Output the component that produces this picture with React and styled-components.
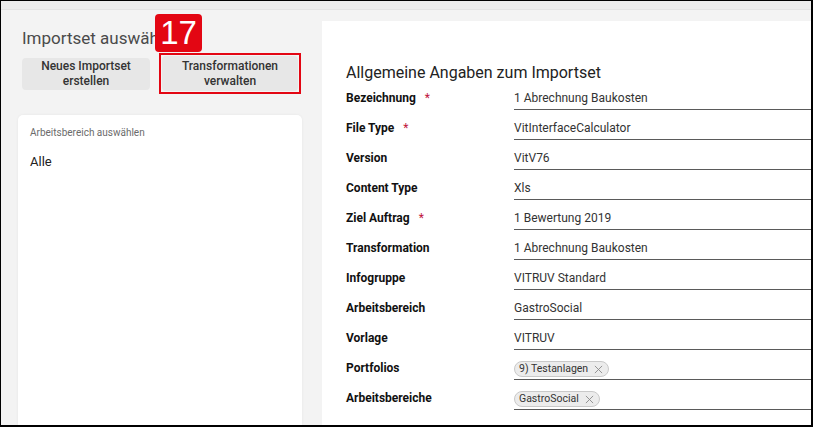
import React from "react";
import styled, { createGlobalStyle } from "styled-components";

const Global = createGlobalStyle`
  html, body { margin: 0; padding: 0; background: #fff; }
  body { font-family: Roboto, "Liberation Sans", Arial, sans-serif; }
  * { box-sizing: border-box; }
`;

const Frame = styled.div`
  width: 813px;
  height: 427px;
  border-style: solid;
  border-color: #000;
  border-width: 1px 2px 2px 1px;
  display: flex;
  flex-direction: column;
  overflow: hidden;
  background: #f3f3f3;
`;

const TopStrip = styled.div`
  height: 9px;
  flex: none;
  background: #ececec;
  border-bottom: 1px solid #e3e3e3;
`;

const Main = styled.div`
  flex: 1;
  display: flex;
  min-height: 0;
`;

const Sidebar = styled.aside`
  position: relative;
  width: 321px;
  flex: none;
  padding: 18px 20px 0 17px;
  display: flex;
  flex-direction: column;
`;

const SideTitle = styled.h2`
  margin: 0 0 0 4px;
  font-size: 17px;
  line-height: 20px;
  font-weight: 400;
  color: #4a4a4a;
  white-space: nowrap;
`;

const ButtonRow = styled.div`
  display: flex;
  align-items: center;
  gap: 9px;
  margin: 5px 0 0 4px;
`;

const Button = styled.button`
  width: ${(p) => p.$w}px;
  height: ${(p) => p.$h}px;
  border: none;
  border-radius: 4px;
  background: #e7e7e7;
  font-family: Roboto, "Liberation Sans", Arial, sans-serif;
  font-size: 12px;
  font-weight: 500;
  line-height: 15px;
  color: #333;
  padding: 0 6px;
  display: block;
`;

const Marker = styled.div`
  border: 2px solid #e30613;
  padding: 1px;
`;

const Badge = styled.div`
  position: absolute;
  left: 154px;
  top: 4px;
  width: 47px;
  height: 38px;
  border-radius: 4px;
  background: #e30613;
  color: #fff;
  font-family: "Liberation Sans", Arial, sans-serif;
  font-size: 33px;
  line-height: 38px;
  text-align: center;
`;

const Card = styled.div`
  margin-top: 21px;
  flex: 1;
  background: #fff;
  border-radius: 5px 5px 0 0;
  box-shadow: 0 0 3px rgba(0, 0, 0, 0.06);
  padding: 12px 12px;
`;

const CardLabel = styled.div`
  font-size: 10px;
  line-height: 12px;
  color: #6b6b6b;
`;

const CardValue = styled.div`
  margin-top: 15px;
  font-size: 13px;
  line-height: 16px;
  color: #222;
`;

const Panel = styled.section`
  flex: 1;
  margin-top: 11px;
  background: #fff;
  padding: 42px 0 0 24px;
`;

const PanelTitle = styled.h1`
  margin: 0 0 1px;
  font-size: 16px;
  line-height: 20px;
  font-weight: 400;
  color: #222;
`;

const Row = styled.div`
  display: flex;
  height: 30px;
`;

const Label = styled.div`
  width: 168px;
  flex: none;
  padding-top: 6px;
  font-size: 12px;
  line-height: 16px;
  font-weight: 700;
  color: #111;
`;

const Req = styled.span`
  color: #c0143c;
  font-weight: 400;
  margin-left: 9px;
`;

const Value = styled.div`
  flex: 1;
  height: 26px;
  padding-top: 6px;
  border-bottom: 1px solid #5a5a5a;
  font-size: 12px;
  line-height: 16px;
  color: #333;
  display: flex;
  align-items: flex-start;
  gap: 6px;
`;

const Chip = styled.span`
  display: inline-flex;
  align-items: center;
  height: 16px;
  margin-top: 1px;
  padding: 0 5px 0 4px;
  border: 1px solid #c9c9c9;
  border-radius: 8px;
  background: #ececec;
  font-size: 10.5px;
  line-height: 14px;
  color: #333;
  gap: 6px;
`;

const ChipX = styled.svg`
  width: 9px;
  height: 9px;
  flex: none;
`;

const rows = [
  { label: "Bezeichnung", req: true, value: "1 Abrechnung Baukosten" },
  { label: "File Type", req: true, value: "VitInterfaceCalculator" },
  { label: "Version", value: "VitV76" },
  { label: "Content Type", value: "Xls" },
  { label: "Ziel Auftrag", req: true, value: "1 Bewertung 2019" },
  { label: "Transformation", value: "1 Abrechnung Baukosten" },
  { label: "Infogruppe", value: "VITRUV Standard" },
  { label: "Arbeitsbereich", value: "GastroSocial" },
  { label: "Vorlage", value: "VITRUV" },
  { label: "Portfolios", chips: ["9) Testanlagen"] },
  { label: "Arbeitsbereiche", chips: ["GastroSocial"] },
];

export default function App() {
  return (
    <>
      <Global />
      <Frame>
        <TopStrip />
        <Main>
          <Sidebar>
            <SideTitle>Importset auswählen</SideTitle>
            <Badge>17</Badge>
            <ButtonRow>
              <Button $w={128} $h={32}>
                Neues Importset
                <br />
                erstellen
              </Button>
              <Marker>
                <Button $w={136} $h={35}>
                  Transformationen
                  <br />
                  verwalten
                </Button>
              </Marker>
            </ButtonRow>
            <Card>
              <CardLabel>Arbeitsbereich auswählen</CardLabel>
              <CardValue>Alle</CardValue>
            </Card>
          </Sidebar>
          <Panel>
            <PanelTitle>Allgemeine Angaben zum Importset</PanelTitle>
            {rows.map((r) => (
              <Row key={r.label}>
                <Label>
                  {r.label}
                  {r.req && <Req>*</Req>}
                </Label>
                <Value>
                  {r.value}
                  {r.chips &&
                    r.chips.map((c) => (
                      <Chip key={c}>
                        {c}
                        <ChipX viewBox="0 0 10 10">
                          <path d="M1 1L9 9M9 1L1 9" stroke="#8a8a8a" strokeWidth="1" fill="none" />
                        </ChipX>
                      </Chip>
                    ))}
                </Value>
              </Row>
            ))}
          </Panel>
        </Main>
      </Frame>
    </>
  );
}
